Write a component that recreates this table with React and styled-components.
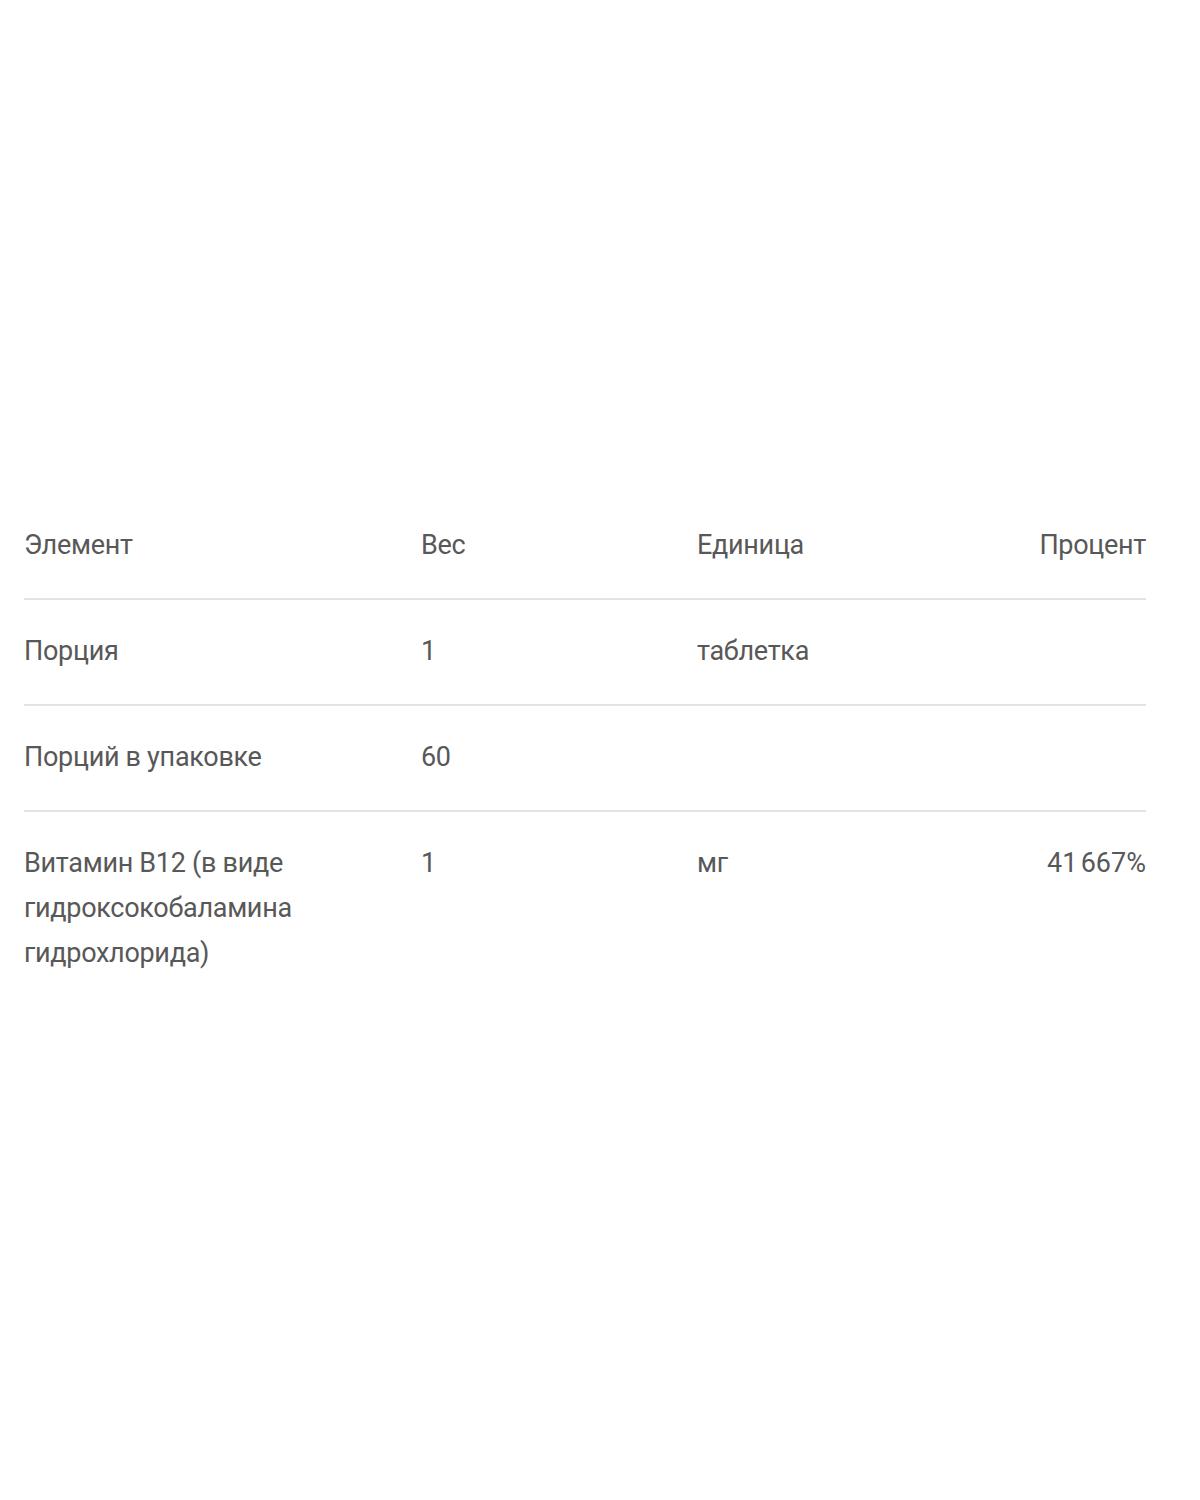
import React from "react";
import styled, { createGlobalStyle } from "styled-components";

const GlobalStyle = createGlobalStyle`
  html, body {
    margin: 0;
    padding: 0;
    background: #ffffff;
  }
  body {
    font-family: Roboto, "Liberation Sans", Arial, sans-serif;
    color: #585858;
  }
`;

const Page = styled.div`
  width: 1200px;
  height: 1500px;
  box-sizing: border-box;
  padding: 494px 54px 0 24px;
`;

const Table = styled.div`
  display: grid;
  grid-template-columns: 397px 276px 1fr auto;
`;

const Row = styled.div`
  display: contents;
`;

const Cell = styled.div`
  padding: 29px 0 30px;
  font-size: 27px;
  line-height: 45px;
  letter-spacing: -0.3px;
  color: #585858;
  text-align: ${(p) => (p.$right ? "right" : "left")};
  border-bottom: ${(p) => (p.$last ? "none" : "2px solid #e3e3e3")};
`;

const Name = styled.span`
  display: block;
  max-width: 300px;
`;

const rows = [
  ["Элемент", "Вес", "Единица", "Процент"],
  ["Порция", "1", "таблетка", ""],
  ["Порций в упаковке", "60", "", ""],
  ["Витамин B12 (в виде гидроксокобаламина гидрохлорида)", "1", "мг", "41\u202F667%"],
];

export default function App() {
  return (
    <>
      <GlobalStyle />
      <Page>
        <Table>
          {rows.map((r, i) => {
            const last = i === rows.length - 1;
            return (
              <Row key={i}>
                <Cell $last={last}>
                  <Name>{r[0]}</Name>
                </Cell>
                <Cell $last={last}>{r[1]}</Cell>
                <Cell $last={last}>{r[2]}</Cell>
                <Cell $last={last} $right>
                  {r[3]}
                </Cell>
              </Row>
            );
          })}
        </Table>
      </Page>
    </>
  );
}
